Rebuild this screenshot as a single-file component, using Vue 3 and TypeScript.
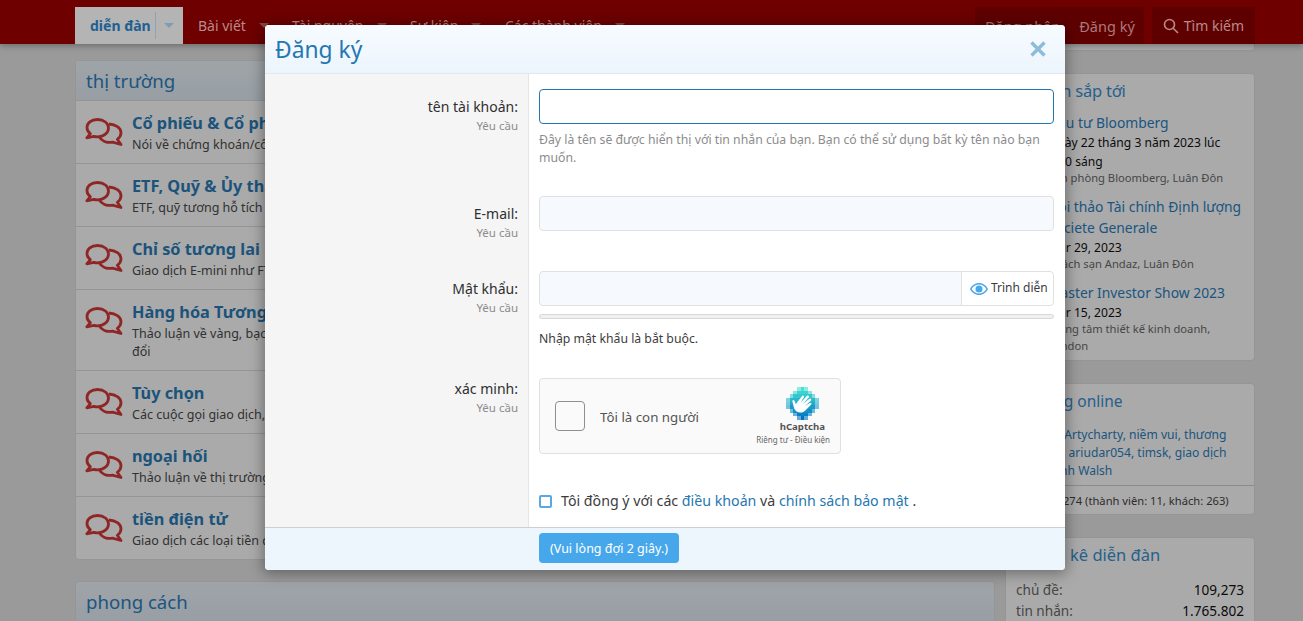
<script setup lang="ts">
import { computed } from 'vue'

interface Forum { title: string; desc: string; tall?: boolean }
const forums: Forum[] = [
  { title: 'Cổ phiếu & Cổ phần', desc: 'Nói về chứng khoán/cổ phiếu và giao dịch cổ phần' },
  { title: 'ETF, Quỹ & Ủy thác', desc: 'ETF, quỹ tương hỗ tích cực và các quỹ ủy thác đầu tư' },
  { title: 'Chỉ số tương lai', desc: 'Giao dịch E-mini như FTSE, DAX và các chỉ số khác' },
  { title: 'Hàng hóa Tương lai', desc: 'Thảo luận về vàng, bạc, dầu, cà phê và hợp đồng hoán\nđổi', tall: true },
  { title: 'Tùy chọn', desc: 'Các cuộc gọi giao dịch, quyền chọn bán và chiến lược' },
  { title: 'ngoại hối', desc: 'Thảo luận về thị trường ngoại hối và tiền tệ' },
  { title: 'tiền điện tử', desc: 'Giao dịch các loại tiền điện tử như Bitcoin' },
]
const navItems = [
  { label: 'Bài viết', w: 94 },
  { label: 'Tài nguyên', w: 118 },
  { label: 'Sự kiện', w: 95 },
  { label: 'Các thành viên', w: 130 },
]
const widths = [3, 5, 7, 9, 9, 9, 7, 5, 3]
const cells = computed(() => {
  const out: { x: number; y: number; fill: string; op: number }[] = []
  widths.forEach((w, r) => {
    const s = (9 - w) / 2
    for (let i = 0; i < w; i++) {
      const t = r / 8
      const R = Math.round(70 - 70 * t)
      const G = Math.round(225 - 110 * t)
      const B = Math.round(210 - 15 * t)
      const edge = i === 0 || i === w - 1
      out.push({ x: s + i, y: r, fill: `rgb(${R},${G},${B})`, op: edge ? 0.6 : 1 })
    }
  })
  return out
})
</script>

<template>
  <div class="root">
    <header class="nav">
      <div class="nav-left">
        <div class="tab">
          <span class="tab-label">diễn đàn</span>
          <span class="tab-split"><i class="caret blue"></i></span>
        </div>
        <div v-for="n in navItems" :key="n.label" class="nav-item" :style="{ width: n.w + 'px' }">
          <span>{{ n.label }}</span><i class="caret"></i>
        </div>
      </div>
      <div class="nav-right">
        <div class="dark-group">
          <span>Đăng nhập</span>
          <span>Đăng ký</span>
        </div>
        <div class="dark-group search">
          <svg width="16" height="16" viewBox="0 0 16 16" fill="none" stroke="#b98a8a" stroke-width="1.6"><circle cx="6.5" cy="6.5" r="5"/><path d="M10.2 10.2 15 15"/></svg>
          <span>Tìm kiếm</span>
        </div>
      </div>
    </header>

    <div class="page">
      <main class="main">
        <section class="card">
          <h2 class="card-head">thị trường</h2>
          <div v-for="f in forums" :key="f.title" class="forum" :class="{ tall: f.tall }">
            <svg class="chat" width="38" height="30" viewBox="0 0 38 30" fill="none" stroke="#d63a3a" stroke-width="2.8" stroke-linejoin="round">
              <path d="M12.5 1.5C6 1.5 2 5.300 2 9.500c0 2.600 1.300 4.700 3.300 6.200L1.800 19.800l7-1.500c1.200.4 2.400.5 3.700.5C19 18.800 23.500 14.800 23.500 10 23.500 5.300 19 1.500 12.500 1.500Z"/>
              <path d="M24 6c6.500.5 12 3.800 12 8.800 0 2.800-1.500 5-3.700 6.500l3.700 5.200-8.500-2.300c-5.700 1-11-1.300-13.500-5.700"/>
            </svg>
            <div class="forum-text">
              <h3>{{ f.title }}</h3>
              <p>{{ f.desc }}</p>
            </div>
          </div>
        </section>
        <section class="card">
          <h2 class="card-head">phong cách</h2>
        </section>
      </main>

      <aside class="side">
        <section class="side-card stub"></section>
        <section class="side-card events">
          <h2>Sự kiện sắp tới</h2>
          <div class="ev"><a>Đầu tư Bloomberg</a><p>Ngày 22 tháng 3 năm 2023 lúc 8:30 sáng</p><small>Văn phòng Bloomberg, Luân Đôn</small></div>
          <div class="ev"><a>Hội thảo Tài chính Định lượng Societe Generale</a><p>Mar 29, 2023</p><small>Khách sạn Andaz, Luân Đôn</small></div>
          <div class="ev"><a>Master Investor Show 2023</a><p>Mar 15, 2023</p><small>Trung tâm thiết kế kinh doanh, London</small></div>
        </section>
        <section class="side-card online">
          <h2>Thường online</h2>
          <p class="names">Sophiia, Artycharty, niềm vui, thương nhân 77, ariudar054, timsk, giao dịch viên, Minh Walsh</p>
          <div class="foot">Tổng số: 274 (thành viên: 11, khách: 263)</div>
        </section>
        <section class="side-card stats">
          <h2>Thống kê diễn đàn</h2>
          <div class="stat"><span>chủ đề:</span><b>109,273</b></div>
          <div class="stat"><span>tin nhắn:</span><b>1.765.802</b></div>
        </section>
      </aside>
    </div>

    <div class="overlay"></div>

    <div class="modal">
      <div class="modal-head">
        <h1>Đăng ký</h1>
        <svg class="close" width="16" height="16" viewBox="0 0 16 16" stroke="#8cbcdc" stroke-width="3.400"><path d="M1.500 1.500 14.500 14.500M14.500 1.500 1.500 14.500"/></svg>
      </div>
      <div class="modal-body">
        <div class="row r1">
          <div class="lab"><label>tên tài khoản:</label><small>Yêu cầu</small></div>
          <div class="ctl">
            <div class="input focus"></div>
            <p class="explain">Đây là tên sẽ được hiển thị với tin nhắn của bạn. Bạn có thể sử dụng bất kỳ tên nào bạn muốn.</p>
          </div>
        </div>
        <div class="row r2">
          <div class="lab"><label>E-mail:</label><small>Yêu cầu</small></div>
          <div class="ctl"><div class="input"></div></div>
        </div>
        <div class="row r3">
          <div class="lab"><label>Mật khẩu:</label><small>Yêu cầu</small></div>
          <div class="ctl">
            <div class="input pw">
              <span class="pw-fill"></span>
              <span class="pw-btn">
                <svg width="18" height="12" viewBox="0 0 18 12"><path fill="#47a7eb" d="M9 0C5 0 1.800 2.400 0 6c1.800 3.600 5 6 9 6s7.200-2.400 9-6c-1.800-3.600-5-6-9-6Zm0 10.500C5.900 10.500 3.300 8.800 1.700 6 3.300 3.200 5.900 1.500 9 1.500s5.700 1.700 7.300 4.500c-1.600 2.800-4.200 4.500-7.300 4.500Z"/><circle cx="9" cy="6" r="3.500" fill="#47a7eb"/></svg>
                <span class="pw-text">Trình diễn</span>
              </span>
            </div>
            <div class="meter"></div>
            <p class="need">Nhập mật khẩu là bắt buộc.</p>
          </div>
        </div>
        <div class="row r4">
          <div class="lab"><label>xác minh:</label><small>Yêu cầu</small></div>
          <div class="ctl">
            <div class="captcha">
              <span class="cap-box"></span>
              <span class="cap-text">Tôi là con người</span>
              <div class="cap-brand">
                <svg class="cap-logo" width="33" height="33" viewBox="0 0 9 9" shape-rendering="crispEdges">
                  <rect v-for="(c, i) in cells" :key="i" :x="c.x" :y="c.y" width="1" height="1" :fill="c.fill" :opacity="c.op"/>
                  <path shape-rendering="auto" fill="#fff" transform="translate(4.4 4.5) scale(1.15) translate(-4.3 -4.4)" d="M2.300 5.200 2 3.900c-.1-.3.400-.5.500-.1l.3.700 1.500-1.900c.2-.3.600 0 .4.300L3.900 4.200l1.500-1.600c.2-.3.700 0 .5.300L4.500 4.500l1.500-1.200c.3-.2.600.1.400.4L5 5l1.100-.7c.3-.2.600.2.300.4L5 6.100c-.6.500-1.400.6-2 .2-.4-.2-.6-.6-.7-1.100Z"/>
                </svg>
                <b>hCaptcha</b>
                <small>Riêng tư - Điều kiện</small>
              </div>
            </div>
            <div class="agree">
              <span class="check"></span>
              <span>Tôi đồng ý với các <a>điều khoản</a> và <a>chính sách bảo mật</a> .</span>
            </div>
          </div>
        </div>
      </div>
      <div class="modal-foot">
        <button class="wait">(Vui lòng đợi 2 giây.)</button>
      </div>
    </div>
  </div>
</template>

<style>
html, body { margin: 0; background: #e6e6e6; overflow: hidden; }
</style>

<style scoped>
.root {
  position: relative;
  width: 1303px;
  height: 621px;
  overflow: hidden;
  background: #e6e6e6;
  font-family: "Noto Sans", "Open Sans", sans-serif;
  font-size: 13px;
  color: #2f2f2f;
}
h1, h2, h3, p { margin: 0; font-weight: 400; }

/* nav sits above the dimming layer, its colours are already dimmed */
.nav {
  position: relative;
  z-index: 3;
  height: 44px;
  box-sizing: border-box;
  padding: 7px 48px 0 75px;
  display: flex;
  justify-content: space-between;
  background: #6e0000;
  box-shadow: 0 2px 6px rgba(0, 0, 0, .3);
}
.nav-left, .nav-right { display: flex; height: 37px; }
.tab {
  width: 108px;
  display: flex;
  align-items: center;
  background: #b4b4b4;
  margin-right: 15px;
  box-sizing: border-box;
  padding-left: 15px;
}
.tab-label { font-weight: 700; font-size: 14px; color: #1f5f92; width: 64px; white-space: nowrap; }
.tab-split { border-left: 1px solid #8fa3b3; height: 27px; margin-left: 1px; padding-left: 8px; display: flex; align-items: center; }
.caret {
  display: inline-block;
  width: 0; height: 0;
  border: 5px solid transparent;
  border-top: 5px solid #8b4545;
  border-bottom: 0;
  margin-left: 13px;
}
.caret.blue { border-top-color: #7e9cb3; margin-left: 0; }
.nav-item { display: flex; align-items: center; color: #b98a8a; font-size: 14px; white-space: nowrap; box-sizing: border-box; }
.nav-right { gap: 8px; }
.dark-group {
  display: flex;
  align-items: center;
  background: #5f0000;
  color: #a97a7a;
  font-size: 14.500px;
  padding: 0 9px 0 10px;
  gap: 19px;
}
.search { color: #b98a8a; font-size: 14px; gap: 5px; padding: 0 11px; }

.page {
  display: flex;
  gap: 10px;
  padding: 0 48px 0 75px;
}
.main { width: 920px; flex: none; padding-top: 16px; display: flex; flex-direction: column; gap: 21px; }
.side { width: 250px; flex: none; display: flex; flex-direction: column; gap: 22px; }
.card {
  background: #fefefe;
  border: 1px solid #dfdfdf;
  border-radius: 4px;
  overflow: hidden;
}
.card-head {
  height: 40px;
  box-sizing: border-box;
  padding: 6px 10px;
  font-size: 18.600px;
  line-height: 28px;
  color: #2e80bd;
  background: linear-gradient(to bottom, #eef5fb, #e2edf6);
  border-bottom: 1px solid #dfdfdf;
}
.forum {
  height: 63px;
  box-sizing: border-box;
  display: flex;
  padding: 0 9px;
  align-items: flex-start;
  border-bottom: 1px solid #dfdfdf;
}
.forum:last-child { border-bottom: 0; height: 62px; }
.forum.tall { height: 81px; }
.chat { margin-top: 17px; flex: none; }
.forum-text { margin-left: 9px; padding-top: 10px; width: 850px; }
.forum-text h3 { font-size: 16.300px; line-height: 24px; font-weight: 700; color: #2b7cb8; white-space: nowrap; }
.forum-text p { font-size: 12.500px; line-height: 18px; margin-top: 1px; color: #4a4a4a; white-space: pre-line; }

.side-card {
  background: #fefefe;
  border: 1px solid #dfdfdf;
  border-radius: 4px;
  padding: 5px 10px 0;
  box-sizing: border-box;
}
.side-card h2 { font-size: 16.500px; line-height: 24px; color: #3a8fd0; }
.events h2 { letter-spacing: -.25px; }
.stub { height: 7px; padding: 0; border-top: 0; border-radius: 0 0 4px 4px; }
.events { height: 288px; }
.ev { margin-top: 10px; padding-left: 32px; }
.ev:first-of-type { margin-top: 9px; }
.ev a { display: block; font-size: 13.850px; line-height: 21px; color: #2b80bf; }
.ev p { font-size: 12.100px; line-height: 19px; color: #111; }
.ev small { display: block; font-size: 11.200px; line-height: 17px; color: #6a6a6a; margin-top: -2px; }
.online { height: 132px; padding: 0; }
.online h2 { padding: 5px 10px 0; font-size: 15.500px; }
.names { padding: 13px 10px 0; font-size: 12.100px; line-height: 18px; color: #2b80bf; height: 72px; box-sizing: border-box; }
.foot {
  border-top: 1px solid #cfcfcf;
  padding: 6px 10px;
  font-size: 11.200px;
  line-height: 18px;
  color: #444;
  white-space: nowrap;
}
.stats { height: 120px; }
.stat { display: flex; justify-content: space-between; font-size: 13.600px; line-height: 21px; color: #6a6a6a; }
.stat:first-of-type { margin-top: 12px; }
.stat b { font-weight: 400; color: #111; }

.overlay {
  position: absolute;
  inset: 44px 0 0 0;
  z-index: 1;
  background: rgba(0, 0, 0, .33);
}

.modal {
  position: absolute;
  z-index: 5;
  left: 265px;
  top: 25px;
  width: 800px;
  height: 545px;
  box-sizing: border-box;
  border-radius: 4px;
  overflow: hidden;
  background: #fff;
  box-shadow: 0 2px 14px 2px rgba(0, 0, 0, .35);
  display: flex;
  flex-direction: column;
}
.modal-head {
  height: 49px;
  flex: none;
  box-sizing: border-box;
  display: flex;
  align-items: center;
  justify-content: space-between;
  padding: 0 19px 0 10px;
  background: linear-gradient(to bottom, #f7fbff, #ecf5fd);
  border-bottom: 1px solid #dfe8ef;
}
.modal-head h1 { font-size: 22.800px; color: #2577b1; line-height: 1; padding-top: 2px; }
.modal-body {
  flex: 1;
  min-height: 0;
  overflow: hidden;
  background: linear-gradient(to right, #f5f5f5 263px, #e5e5e5 263px, #e5e5e5 264px, #fff 264px);
}
.row { display: flex; }
.r1 { height: 122px; padding-top: 15px; box-sizing: border-box; }
.r2 { height: 75px; }
.r3 { height: 107px; }
.lab {
  width: 253px;
  flex: none;
  text-align: right;
  padding-top: 8px;
}
.r4 .lab { padding-top: 1px; }
.lab label { display: block; font-size: 14px; line-height: 20px; color: #2f2f2f; }
.lab small { display: block; font-size: 11.500px; line-height: 17px; color: #8c8c8c; }
.ctl { margin-left: 21px; width: 515px; }
.input {
  height: 35px;
  box-sizing: border-box;
  border: 1px solid #e0e0e0;
  border-radius: 4px;
  background: #f6fafe;
}
.input.focus { background: #fff; border-color: #2577b1; }
.pw { display: flex; }
.pw-fill { flex: 1; }
.pw-btn {
  width: 92px;
  box-sizing: border-box;
  background: #fff;
  border-left: 1px solid #e0e0e0;
  border-radius: 0 4px 4px 0;
  display: flex;
  align-items: center;
  gap: 3px;
  padding-left: 8px;
  font-size: 12px;
  color: #3c3c3c;
  white-space: nowrap;
}
.pw-text { position: relative; top: -1px; }
.explain { font-size: 12.250px; line-height: 18px; color: #8c8c8c; margin-top: 7px; }
.meter { height: 5px; margin-top: 8px; background: #f0f0f0; border: 1px solid #d8d8d8; border-radius: 3px; box-sizing: border-box; }
.need { margin-top: 11px; font-size: 12.250px; line-height: 18px; color: #3c3c3c; }
.captcha {
  width: 302px;
  height: 76px;
  box-sizing: border-box;
  border: 1px solid #e0e0e0;
  border-radius: 4px;
  background: #fafafa;
  display: flex;
  align-items: center;
  position: relative;
}
.cap-box { width: 30px; height: 30px; box-sizing: border-box; border: 1px solid #8f8f8f; border-radius: 4px; background: #fafafa; margin-left: 15px; }
.cap-text { margin-left: 15px; font-size: 13.300px; color: #555; position: relative; top: 1px; }
.cap-brand {
  position: absolute;
  right: 10px;
  top: 8px;
  display: flex;
  flex-direction: column;
  align-items: flex-end;
}
.cap-logo { margin-right: 11px; }
.cap-brand b { font-size: 9.600px; line-height: 12px; margin-top: 1px; margin-right: 5px; color: #555; }
.cap-brand small { font-size: 8px; line-height: 12px; margin-top: 1px; color: #666; white-space: nowrap; }
.agree { display: flex; align-items: center; gap: 9px; margin-top: 37px; font-size: 14.200px; line-height: 20px; color: #3c3c3c; white-space: nowrap; }
.agree a { color: #2577b1; }
.check { width: 13px; height: 13px; box-sizing: border-box; border: 2px solid #58a9e3; border-radius: 2px; background: #fff; position: relative; top: 0; }
.modal-foot {
  height: 43px;
  flex: none;
  box-sizing: border-box;
  background: #eef6fd;
  border-top: 1px solid #cfcfcf;
  padding: 5px 0 0 274px;
}
.wait {
  width: 140px;
  height: 30px;
  border: 0;
  border-radius: 4px;
  padding: 0;
  background: #47a7eb;
  color: #fff;
  font-family: inherit;
  font-size: 12.500px;
}
</style>
